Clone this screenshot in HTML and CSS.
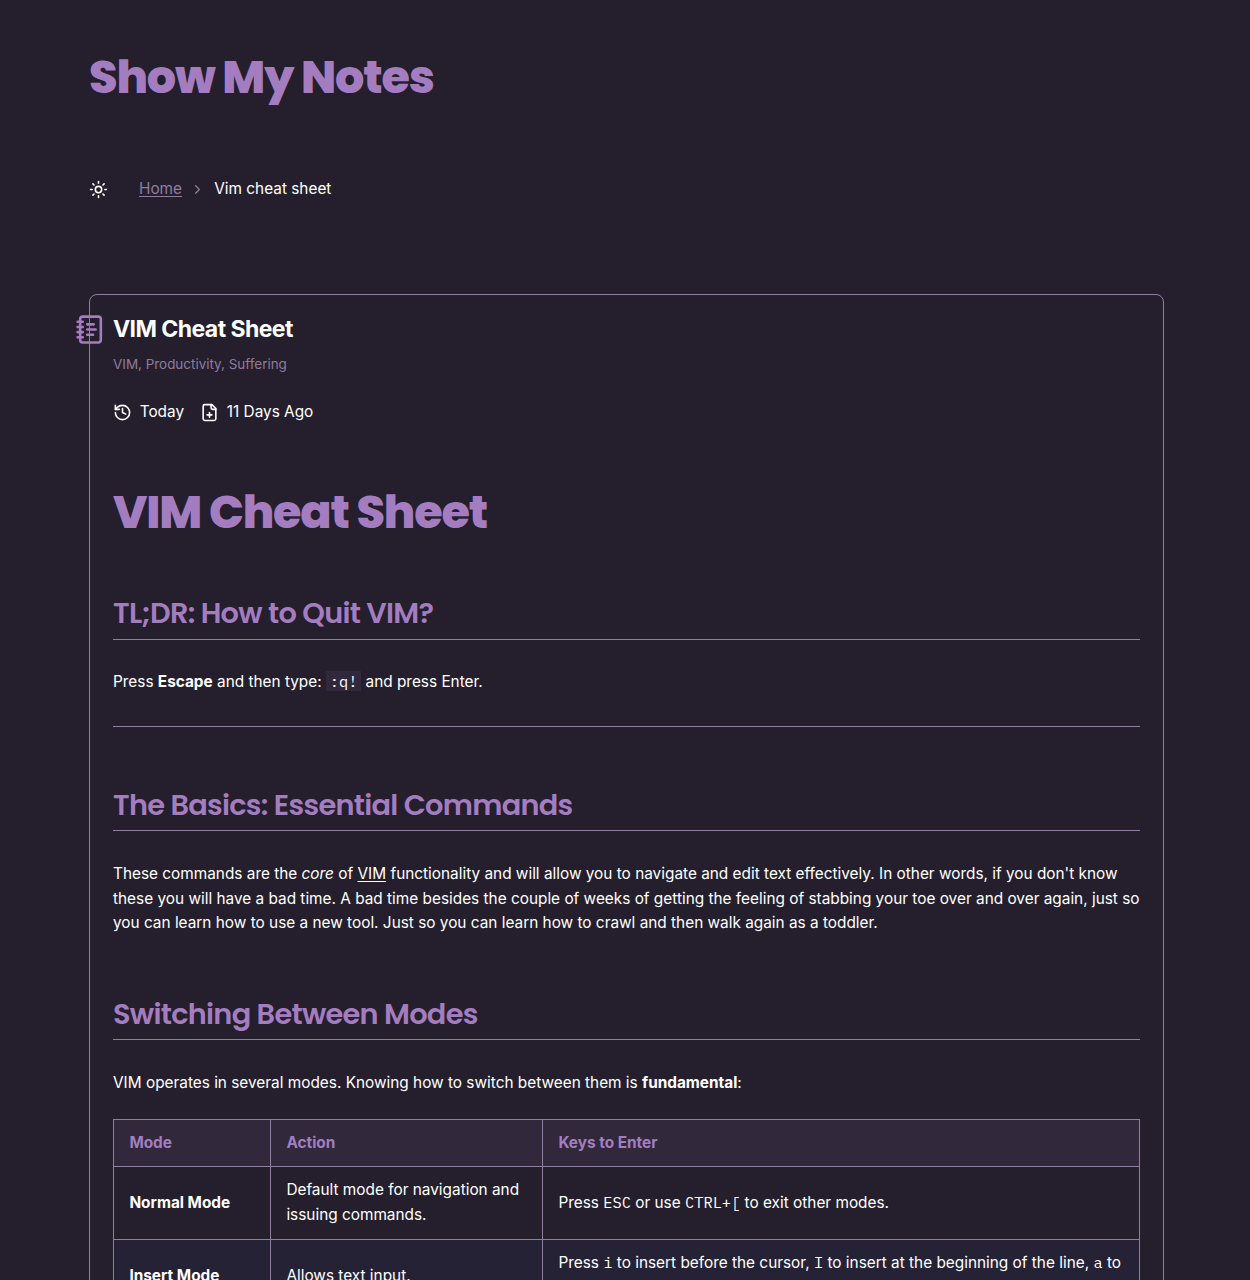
FILE: index.html
```html
<!DOCTYPE html>
<html lang="en">
<head>
<meta charset="utf-8">
<title>Vim cheat sheet</title>
<link rel="stylesheet" href="styles.css">
</head>
<body>
<div class="page">
  <header>
    <h1 class="site-title">Show My Notes</h1>
    <nav class="nav">
      <svg class="icon" viewBox="0 0 24 24"><circle cx="12" cy="12" r="4"/><path d="M12 2v2M12 20v2M4.93 4.93l1.41 1.41M17.66 17.66l1.41 1.41M2 12h2M20 12h2M6.34 17.66l-1.41 1.41M19.07 4.93l-1.41 1.41"/></svg>
      <a class="crumb" href="#">Home</a>
      <svg class="chevron" viewBox="0 0 24 24"><path d="m9 18 6-6-6-6"/></svg>
      <span>Vim cheat sheet</span>
    </nav>
  </header>
  <main class="card">
    <svg class="badge" viewBox="0 0 24 24"><path d="M2 6h4M2 10h4M2 14h4M2 18h4"/><rect width="16" height="20" x="4" y="2" rx="2"/><path d="M9.5 8h5M9.5 12H16M9.5 16H14"/></svg>
    <div class="card-title">VIM Cheat Sheet</div>
    <div class="tags">VIM, Productivity, Suffering</div>
    <div class="dates">
      <span class="date"><svg class="icon" viewBox="0 0 24 24"><path d="M3 12a9 9 0 1 0 9-9 9.75 9.75 0 0 0-6.74 2.74L3 8"/><path d="M3 3v5h5M12 7v5l4 2"/></svg>Today</span>
      <span class="date"><svg class="icon" viewBox="0 0 24 24"><path d="M15 2H6a2 2 0 0 0-2 2v16a2 2 0 0 0 2 2h12a2 2 0 0 0 2-2V7Z"/><path d="M14 2v4a2 2 0 0 0 2 2h4M9 15h6M12 18v-6"/></svg>11 Days Ago</span>
    </div>
    <article>
      <h1 class="doc-title">VIM Cheat Sheet</h1>
      <h2 class="h-quit">TL;DR: How to Quit VIM?</h2>
      <p>Press <strong>Escape</strong> and then type: <code class="chip">:q!</code> and press Enter.</p>
      <hr>
      <h2 class="h-basics">The Basics: Essential Commands</h2>
      <p>These commands are the <em>core</em> of <a href="#">VIM</a> functionality and will allow you to navigate and edit text effectively. In other words, if you don't know these you will have a bad time. A bad time besides the couple of weeks of getting the feeling of stabbing your toe over and over again, just so you can learn how to use a new tool. Just so you can learn how to crawl and then walk again as a toddler.</p>
      <h2 class="h-modes">Switching Between Modes</h2>
      <p>VIM operates in several modes. Knowing how to switch between them is <strong>fundamental</strong>:</p>
      <table>
        <colgroup><col class="c-mode"><col class="c-action"><col></colgroup>
        <thead><tr><th>Mode</th><th>Action</th><th>Keys to Enter</th></tr></thead>
        <tbody>
          <tr><td><strong>Normal Mode</strong></td><td>Default mode for navigation and issuing commands.</td><td>Press <code>ESC</code> or use <code>CTRL+[</code> to exit other modes.</td></tr>
          <tr><td><strong>Insert Mode</strong></td><td>Allows text input.</td><td>Press <code>i</code> to insert before the cursor, <code>I</code> to insert at the beginning of the line, <code>a</code> to append after the cursor.</td></tr>
        </tbody>
      </table>
    </article>
  </main>
</div>
</body>
</html>
```
FILE: styles.css
```css
* { box-sizing: border-box; }
html { height: 100%; overflow: hidden; }
body {
  height: 100%;
  margin: 0;
  overflow: hidden;
  background: #251f2d;
  color: #fff;
  font: 15.36px/24.6px Inter, sans-serif;
}
.page { width: 1075px; margin-left: 89px; padding-top: 42px; }
h1, h2 {
  margin: 0;
  color: #a47dc0;
  font-family: Poppins, Inter, sans-serif;
  letter-spacing: -0.025em;
}
h1 { font-size: 46.08px; line-height: 70px; font-weight: 800; white-space: nowrap; }
.nav { display: flex; align-items: center; height: 26px; margin-top: 64px; }
svg { fill: none; stroke: currentColor; stroke-width: 2; stroke-linecap: round; stroke-linejoin: round; flex: none; }
.icon { width: 19px; height: 19px; }
.crumb { margin-left: 31px; color: #8e7c9d; }
a { color: inherit; text-underline-offset: 2px; }
.chevron { width: 15px; height: 15px; margin: 1px 9.2px 0 8px; color: #8e7c9d; }
.card {
  position: relative;
  height: 1400px;
  margin-top: 92px;
  padding: 20px 23px;
  border: 1px solid #8f7fa3;
  border-radius: 8px;
}
.badge { position: absolute; left: -15px; top: 19px; width: 31px; height: 31px; color: #a47dc0; }
.card-title { font-size: 23.04px; line-height: 28px; font-weight: 700; letter-spacing: -0.576px; }
.tags { margin-top: 11px; font-size: 13.44px; line-height: 20px; color: #8e7c9d; }
.dates { display: flex; gap: 16px; margin-top: 26px; }
.date { display: flex; align-items: center; gap: 7.7px; }
.doc-title { margin-top: 52px; }
h2 {
  height: 48px;
  border-bottom: 1px solid #8f7fa3;
  font-size: 28.8px;
  line-height: 43px;
  font-weight: 600;
}
.h-quit { margin-top: 45px; }
p { margin: 30.75px 0 0; }
hr { height: 1px; margin: 31.25px 0 0; border: 0; background: #8f7fa3; }
.h-basics { margin-top: 56px; line-height: 45px; }
.h-modes { margin-top: 56.25px; line-height: 45px; }
code { font: 15.36px/1 "IBM Plex Mono", "Liberation Mono", monospace; }
.chip { padding: 0 3.8px; background: #32283c; }
table {
  width: 1027px;
  margin-top: 23.25px;
  border-collapse: collapse;
  table-layout: fixed;
}
.c-mode { width: 157px; }
.c-action { width: 272px; }
th, td { padding: 11.3px 15.4px; border: 1px solid #8f7fa3; text-align: left; }
th { padding-block: 11px; background: #32283c; color: #a47dc0; font-weight: 700; }
tbody tr:nth-child(even) { background: #262236; }
```
